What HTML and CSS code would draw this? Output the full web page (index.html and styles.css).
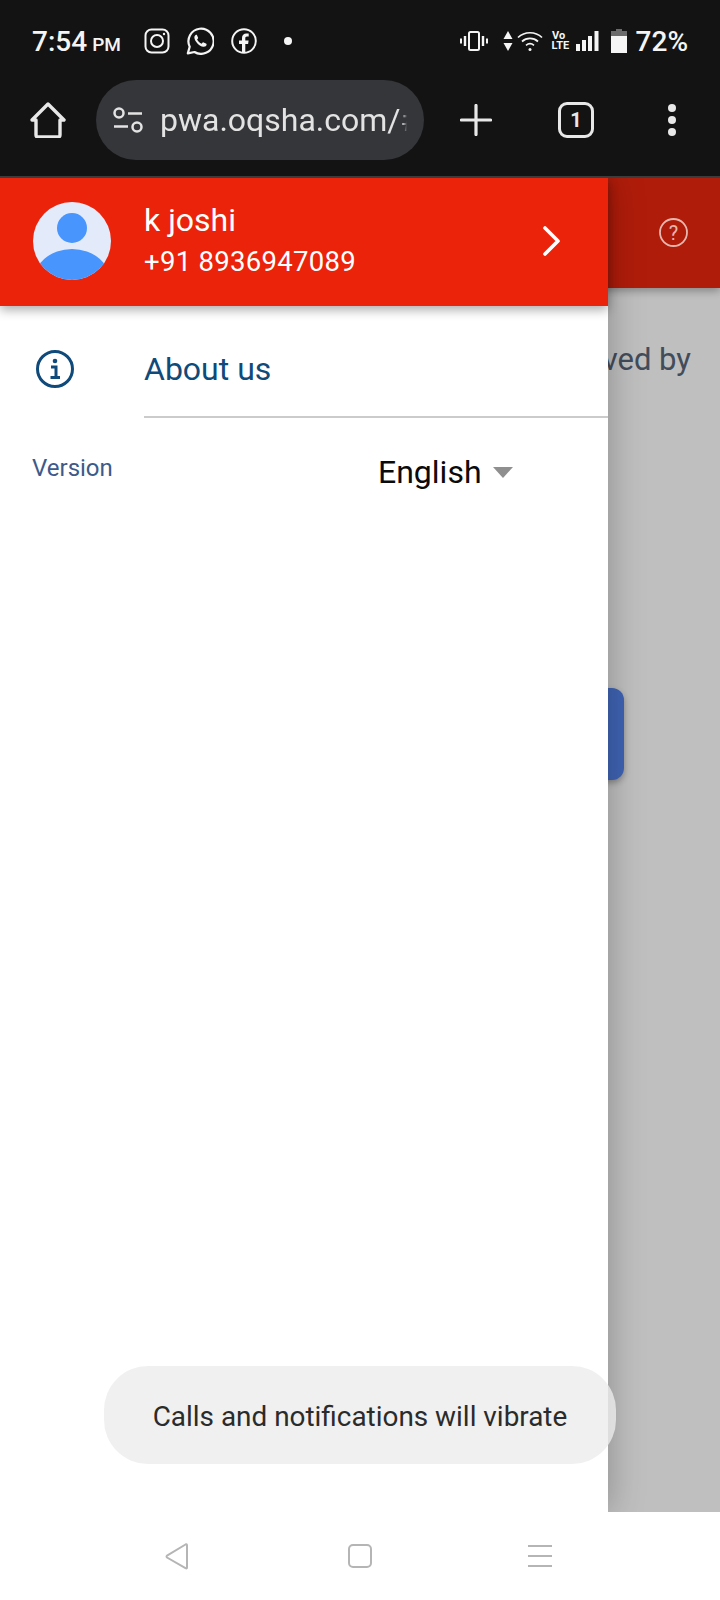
FILE: index.html
```html
<!DOCTYPE html>
<html lang="en">
<head>
<meta charset="utf-8">
<title>pwa.oqsha.com</title>
<link rel="stylesheet" href="styles.css">
</head>
<body>
<div class="screen">
  <header class="chrome">
    <div class="status">
      <div class="time">7:54<span class="ampm">PM</span></div>
      <div class="notif">
        <svg class="ic-ig" viewBox="0 0 26 26" fill="none" stroke="#f5f5f5" stroke-width="2"><rect x="1.5" y="1.5" width="23" height="23" rx="6"/><circle cx="13" cy="13" r="6"/><circle cx="20" cy="6" r="1.2" fill="#f5f5f5" stroke="none"/></svg>
        <svg class="ic-wa" viewBox="0 0 28 28" fill="none" stroke="#f5f5f5" stroke-width="2.2"><path d="M1.8 26.4l1.9-6.7A12.6 12.6 0 1 1 8.5 25z" stroke-linejoin="round"/><path d="M10 7.8c-1 .4-1.8 1.6-1.6 3.2.4 3.400 4.800 8.200 9 8.800 1.800.2 3-.8 3.200-2 .1-.6-.1-.9-.6-1.200l-2.400-1.200c-.5-.2-.8 0-1.100.3l-.9 1.100c-1.800-.6-3.700-2.400-4.500-4.200l.8-1c.3-.4.300-.7.100-1.100l-1-2.300c-.2-.4-.5-.5-1-.4z" fill="#f5f5f5" stroke="none"/></svg>
        <svg class="ic-fb" viewBox="0 0 26 26" fill="none"><circle cx="13" cy="13" r="11.800" stroke="#f5f5f5" stroke-width="2"/><path d="M11 25v-9H8v-3.400h3V10c0-3 1.800-4.600 4.400-4.600.9 0 1.800.1 2.300.2v3h-1.700c-1.300 0-1.700.8-1.700 1.700v2.300h3.300l-.5 3.400h-2.800v9z" fill="#f5f5f5"/></svg>
        <span class="dot"></span>
      </div>
      <div class="sys">
        <svg class="ic-vib" viewBox="0 0 28 20" fill="none" stroke="#f5f5f5"><rect x="9" y="1" width="10" height="18" rx="1.500" stroke-width="2"/><path d="M5 5v10M23 5v10" stroke-width="2.400"/><path d="M1 7.500v5M27 7.500v5" stroke-width="2"/></svg>
        <svg class="ic-arrows" viewBox="0 0 10 20" fill="#f5f5f5"><path d="M5 0l4.500 8H.5zM5 20L.5 12h9z"/></svg>
        <svg class="ic-wifi" viewBox="0 0 26 20" fill="none" stroke="#f5f5f5" stroke-width="1.700"><path d="M1 6.500a17.500 17.500 0 0 1 24 0M5 10.500a12 12 0 0 1 16 0M9 14.300a6.500 6.500 0 0 1 8 0"/><circle cx="13" cy="18.500" r="1.500" fill="#f5f5f5" stroke="none"/></svg>
        <span class="volte">Vo<br>LTE</span>
        <svg class="ic-signal" viewBox="0 0 23 20" fill="#f5f5f5"><rect x="0" y="13" width="4" height="7"/><rect x="6" y="9" width="4" height="11"/><rect x="12" y="5" width="4" height="15"/><rect x="18.500" y="0" width="4" height="20"/></svg>
        <svg class="ic-batt" viewBox="0 0 16 24"><path d="M5 0h6v2h5v22H0V2h5z" fill="#6b6b6b"/><rect y="7" width="16" height="17" fill="#f5f5f5"/></svg>
        <span class="pct">72%</span>
      </div>
    </div>
    <div class="toolbar">
      <svg class="ic-home" viewBox="0 0 36 36" fill="none" stroke="#e8e8e8" stroke-width="3.400" stroke-linejoin="round" stroke-linecap="round"><path d="M2 18L18 2l16 16h-4v15a2 2 0 0 1-2 2H8a2 2 0 0 1-2-2V18z"/></svg>
      <div class="pill">
        <svg class="ic-tune" viewBox="0 0 30 26" fill="none" stroke="#e3e3e3" stroke-width="2.500"><circle cx="6" cy="6" r="4.500"/><path d="M15 6.500h14M1 19.500h14"/><circle cx="24" cy="20" r="4.500"/></svg>
        <div class="url">pwa.oqsha.com/#/home</div>
      </div>
      <svg class="ic-plus" viewBox="0 0 32 32" stroke="#e8e8e8" stroke-width="3.200" stroke-linecap="round"><path d="M16 1.500v29M1.500 16h29"/></svg>
      <div class="tabs">1</div>
      <div class="more"><i></i><i></i><i></i></div>
    </div>
  </header>
  <div class="divider-top"></div>
  <main class="page">
    <div class="appbar">
      <svg class="ic-help" viewBox="0 0 29 29" fill="none"><circle cx="14.500" cy="14.500" r="13.500" stroke="#e4b8b0" stroke-width="1.800"/><text x="14.500" y="21.500" text-anchor="middle" class="help-q">?</text></svg>
    </div>
    <p class="loved">Loved by</p>
    <div class="cta"></div>
    <aside class="drawer">
      <div class="profile">
        <svg class="avatar" viewBox="0 0 78 78"><defs><clipPath id="av"><circle cx="39" cy="39" r="39"/></clipPath></defs><circle cx="39" cy="39" r="39" fill="#e3ebfb"/><circle cx="39" cy="26" r="15" fill="#4795fd"/><ellipse cx="39" cy="80" rx="39" ry="33" fill="#4795fd" clip-path="url(#av)"/></svg>
        <div class="who">
          <div class="name">k joshi</div>
          <div class="phone">+91 8936947089</div>
        </div>
        <svg class="chev" viewBox="0 0 20 32" fill="none" stroke="#fff" stroke-width="3.600" stroke-linecap="round" stroke-linejoin="round"><path d="M4 3l13 13L4 29"/></svg>
      </div>
      <div class="menu-row">
        <svg class="ic-info" viewBox="0 0 38 38" fill="none"><circle cx="19" cy="19" r="17.500" stroke="#0f4a7a" stroke-width="3"/><circle cx="19" cy="11" r="2.300" fill="#0f4a7a"/><path d="M15 17h5v10M14.500 27.500h9.500" stroke="#0f4a7a" stroke-width="3"/></svg>
        <div class="menu-label">About us</div>
      </div>
      <div class="foot">
        <span class="version">Version</span>
        <span class="lang">English<i class="caret"></i></span>
      </div>
    </aside>
  </main>
  <nav class="nav">
    <svg class="nav-back" viewBox="0 0 24 27" fill="none" stroke="#b5b5b5" stroke-width="2" stroke-linejoin="round"><path d="M22 2.500v22q0 1.500-1.500.6L2 14.500q-1-.9 0-1.800L20.500 1.500q1.500-.8 1.500 1z"/></svg>
    <svg class="nav-home" viewBox="0 0 24 24" fill="none" stroke="#b5b5b5" stroke-width="2"><rect x="1" y="1" width="22" height="22" rx="4"/></svg>
    <svg class="nav-menu" viewBox="0 0 24 24" fill="none" stroke="#b5b5b5" stroke-width="2"><path d="M0 2h24M0 12h24M0 22h24"/></svg>
  </nav>
  <div class="toast">Calls and notifications will vibrate</div>
</div>
</body>
</html>
```

FILE: styles.css
```css
* { box-sizing: border-box; }
html, body { margin: 0; padding: 0; }
body { font-family: Roboto, "Liberation Sans", sans-serif; background: #fff; }
.screen { position: relative; width: 720px; height: 1600px; display: flex; flex-direction: column; overflow: hidden; }

.chrome { background: #131313; height: 176px; color: #f5f5f5; flex: none; }
.divider-top { height: 2px; background: #3c3c3c; flex: none; }

.status { height: 82px; margin-bottom: -2px; display: flex; align-items: center; padding: 0 32px 0 32px; }
.time { font-size: 28px; font-weight: 500; width: 112px; white-space: nowrap; }
.ampm { font-size: 19px; margin-left: 5px; }
.notif { display: flex; align-items: center; }
.ic-ig { width: 26px; height: 26px; }
.ic-wa { width: 28px; height: 28px; margin-left: 16px; }
.ic-fb { width: 26px; height: 26px; margin-left: 17px; }
.dot { width: 8px; height: 8px; border-radius: 50%; background: #f5f5f5; margin-left: 27px; }
.sys { margin-left: auto; display: flex; align-items: center; }
.ic-vib { width: 28px; height: 20px; }
.ic-arrows { width: 10px; height: 20px; margin-left: 15px; }
.ic-wifi { width: 26px; height: 20px; margin-left: 4px; }
.volte { font-family: "Liberation Sans Narrow", Roboto, sans-serif; font-size: 11px; line-height: 10px; font-weight: 700; width: 14px; margin-left: 9px; text-align: center; }
.ic-signal { width: 23px; height: 20px; margin-left: 10px; }
.ic-batt { width: 16px; height: 24px; margin-left: 12px; }
.pct { font-size: 28px; font-weight: 500; margin-left: 9px; }

.toolbar { height: 80px; display: flex; align-items: center; padding-left: 30px; }
.ic-home { width: 36px; height: 36px; flex: none; }
.pill { width: 328px; height: 80px; border-radius: 40px; background: #35363a; margin-left: 30px; display: flex; align-items: center; padding-left: 17px; flex: none; }
.ic-tune { width: 30px; height: 26px; flex: none; }
.url { font-size: 32px; color: #e3e3e3; margin-left: 17px; width: 247px; overflow: hidden; white-space: nowrap; -webkit-mask-image: linear-gradient(to right, #000 98%, transparent 100%); mask-image: linear-gradient(to right, #000 98%, transparent 100%); }
.ic-plus { width: 32px; height: 32px; margin-left: 36px; flex: none; }
.tabs { width: 36px; height: 36px; border: 3.500px solid #e8e8e8; border-radius: 9px; margin-left: 66px; font-size: 20px; font-weight: 700; color: #e8e8e8; display: flex; align-items: center; justify-content: center; flex: none; }
.more { display: flex; flex-direction: column; gap: 4px; margin-left: 74px; }
.more i { display: block; width: 8px; height: 8px; border-radius: 50%; background: #e8e8e8; }

.page { position: relative; flex: 1; background: #bfbfbf; overflow: hidden; }
.appbar { height: 110px; background: #b01c0a; box-shadow: 0 3px 8px rgba(0,0,0,.3); display: flex; justify-content: flex-end; align-items: center; padding: 0 32px 0 0; }
.ic-help { width: 29px; height: 29px; margin-bottom: 2px; }
.help-q { font-family: Roboto, sans-serif; font-size: 20px; fill: #e4b8b0; }
.loved { margin: 52px 29px 0 0; text-align: right; font-size: 31px; line-height: 40px; color: #424c5a; }
.cta { width: 64px; height: 92px; margin: 308px 0 0 560px; background: #3f63b3; border-radius: 12px; box-shadow: 0 3px 6px rgba(0,0,0,.3); }

.drawer { position: absolute; left: 0; top: 0; bottom: 0; width: 608px; background: #fff; box-shadow: 0 0 34px rgba(0,0,0,.28); }
.profile { height: 128px; background: #ec230b; box-shadow: 0 4px 10px rgba(0,0,0,.32); display: flex; align-items: center; padding-left: 33px; position: relative; }
.avatar { width: 78px; height: 78px; flex: none; margin-bottom: 2px; }
.who { margin-left: 33px; color: #fff; }
.name { font-size: 32px; line-height: 40px; }
.phone { font-size: 27.500px; line-height: 44px; letter-spacing: .3px; }
.chev { width: 20px; height: 32px; margin-left: auto; margin-right: 47px; margin-bottom: 2px; }
.menu-row { display: flex; height: 112px; align-items: center; padding: 14px 0 0 36px; position: relative; }
.ic-info { width: 38px; height: 38px; flex: none; }
.menu-label { align-self: stretch; flex: 1; margin: -14px 0 0 70px; padding-top: 16px; display: flex; align-items: center; font-size: 32px; color: #0f4a7a; border-bottom: 2px solid #cbcbcb; }
.foot { display: flex; align-items: flex-start; padding: 35px 0 0 32px; }
.version { font-size: 24px; line-height: 30px; color: #3d5a8a; width: 346px; }
.lang { font-size: 32px; color: #0a0a0a; display: flex; align-items: center; }
.caret { width: 0; height: 0; border-left: 10px solid transparent; border-right: 10px solid transparent; border-top: 11px solid #8f8f8f; margin-left: 11px; }

.nav { height: 88px; background: #fff; flex: none; display: flex; align-items: center; padding: 0 0 0 165px; }
.nav-back { width: 24px; height: 27px; }
.nav-home { width: 24px; height: 24px; margin-left: 159px; }
.nav-menu { width: 24px; height: 24px; margin-left: 156px; }

.toast { position: absolute; left: 104px; top: 1366px; width: 512px; height: 98px; padding-top: 2px; border-radius: 44px; background: rgba(236,236,236,.8); color: #2b2b2b; font-size: 27.900px; display: flex; align-items: center; justify-content: center; }
```
